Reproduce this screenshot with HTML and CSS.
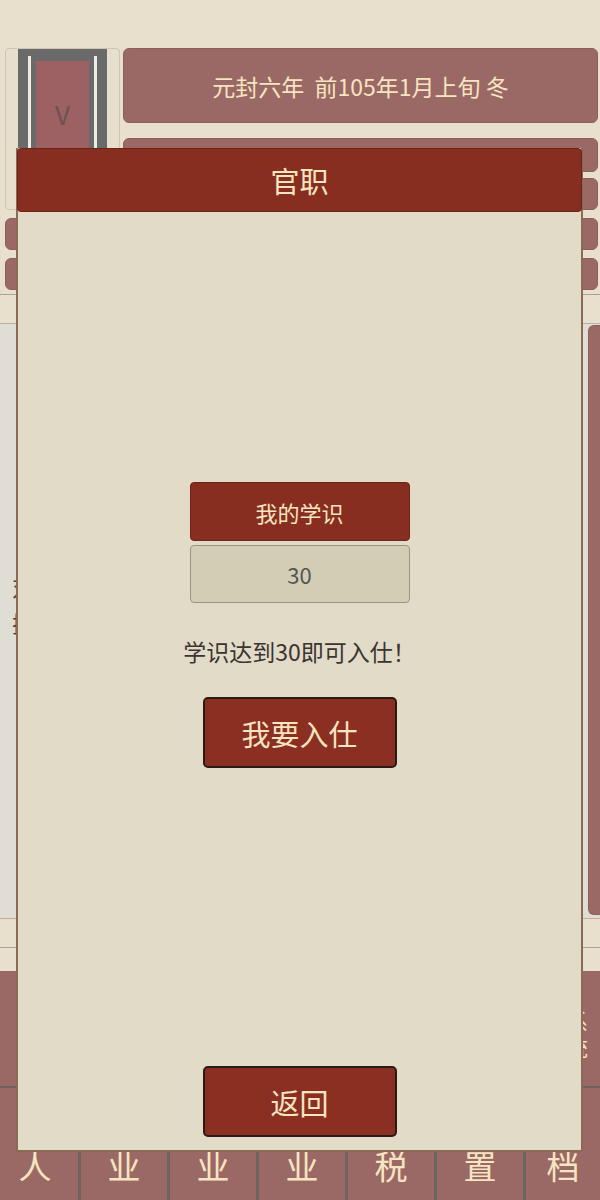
FILE: index.html
```html
<!DOCTYPE html>
<html lang="zh-CN">
<head>
    <meta charset="UTF-8">
    <meta name="viewport" content="width=device-width, initial-scale=1.0">
    <title>官职</title>
    <link rel="stylesheet" href="styles.css">
</head>
<body>
    <div class="app">
        <div class="top">
            <div class="portrait">
                <div class="frame">
                    <div class="rail">
                        <div class="face">V</div>
                    </div>
                </div>
            </div>
            <div class="info">
                <div class="bar date">元封六年&nbsp;&nbsp;前105年1月上旬 冬</div>
                <div class="bar info-a"></div>
                <div class="bar info-b"></div>
            </div>
        </div>
        <div class="bar row"></div>
        <div class="bar row"></div>
        <div class="strip"></div>

        <div class="main">
            <div class="log">
                <p>对酒当歌</p>
                <p>拂衣而去</p>
            </div>
            <div class="side"></div>
        </div>

        <div class="strip strip-a"></div>
        <div class="strip strip-b"></div>

        <div class="actions">
            <span class="vlabel">系统</span>
        </div>

        <nav class="tabs">
            <div class="tab">人</div>
            <div class="tab">业</div>
            <div class="tab">业</div>
            <div class="tab">业</div>
            <div class="tab">税</div>
            <div class="tab">置</div>
            <div class="tab">档</div>
        </nav>
    </div>

    <!-- 官职弹窗 -->
    <div class="modal">
        <header class="modal-title">官职</header>
        <div class="modal-body">
            <div class="stat-label">我的学识</div>
            <div class="stat-value">30</div>
            <p class="hint">学识达到30即可入仕！</p>
            <button class="btn">我要入仕</button>
            <button class="btn back">返回</button>
        </div>
    </div>
</body>
</html>
```

FILE: styles.css
```css
:root {
    --page-bg: #e8e0cd;
    --mauve: #9a6966;
    --mauve-edge: #8e5e5b;
    --cream: #f7e4c0;
    --red: #882e20;
    --red-edge: #6c2318;
    --panel-bg: #e2dbc8;
    --panel-edge: #8c6b55;
    --grey-panel: #dfddd4;
}

* {
    box-sizing: border-box;
}

body {
    margin: 0;
    height: 1200px;
    overflow: hidden;
    background-color: var(--page-bg);
    font-family: "Noto Sans CJK SC", "Noto Sans", sans-serif;
    color: #3b3431;
    position: relative;
}

.app {
    padding-top: 48px;
}

.bar {
    background-color: var(--mauve);
    border: 1px solid var(--mauve-edge);
    border-radius: 6px;
}

/* 顶部：头像 + 日期 */
.top {
    display: flex;
    gap: 3px;
    height: 162px;
    padding-left: 5px;
}

.portrait {
    width: 115px;
    background-color: #e6dfcc;
    border: 1px solid #cdc6b5;
    border-radius: 4px;
    padding: 0 12px;
    overflow: hidden;
}

.frame {
    height: 100%;
    background-color: #6a6a6a;
    padding: 7px 10px 0;
}

.rail {
    height: 100%;
    border-left: 3px solid #ecebe4;
    border-right: 3px solid #ecebe4;
    padding: 5px 5px 0;
}

.face {
    height: 100%;
    background-color: #9e6163;
    color: #6a5454;
    font-size: 26px;
    text-align: center;
    padding-top: 34px;
}

.info {
    flex: 1;
    display: flex;
    flex-direction: column;
    padding-right: 2px;
}

.date {
    height: 75px;
    display: flex;
    align-items: center;
    justify-content: center;
    color: var(--cream);
    font-size: 23px;
    white-space: pre;
}

.info-a {
    height: 34px;
    margin-top: 15px;
}

.info-b {
    height: 32px;
    margin-top: 6px;
}

.row {
    height: 32px;
    margin: 8px 2px 0 5px;
}

.strip {
    margin-top: 4px;
    height: 30px;
    border-top: 1px solid #aaa398;
    border-bottom: 1px solid #b6b1a6;
}

/* 中部日志区 */
.main {
    height: 594px;
    background-color: var(--grey-panel);
    display: flex;
    padding: 1px 0 3px;
}

.log {
    flex: 1;
    padding: 243px 0 0 12px;
    font-size: 22px;
    line-height: 36px;
    color: #444;
}

.log p {
    margin: 0;
}

.side {
    width: 12px;
    background-color: var(--mauve);
    border: 1px solid var(--mauve-edge);
    border-right: none;
    border-radius: 6px 0 0 6px;
}

.strip-a {
    margin-top: 0;
    height: 29px;
    border-top: 1px solid #c7ab95;
    border-bottom: none;
}

.strip-b {
    margin-top: 0;
    height: 24px;
    border-top: 1px solid #aaa398;
    border-bottom: none;
}

.actions {
    height: 117px;
    background-color: var(--mauve);
    border-bottom: 2px solid #6a625c;
    display: flex;
    justify-content: flex-end;
    align-items: center;
    padding-right: 12px;
}

.vlabel {
    width: 22px;
    font-size: 22px;
    line-height: 26px;
    color: var(--cream);
    margin-top: 8px;
}

/* 底部标签栏 */
.tabs {
    display: grid;
    grid-template-columns: 78px repeat(5, 89px) 1fr;
    height: 112px;
    background-color: var(--mauve);
}

.tab {
    padding: 59px 0 0;
    text-align: center;
    font-size: 33px;
    line-height: 36px;
    color: var(--cream);
}

.tab:first-child {
    padding-right: 8px;
}

.tab + .tab {
    border-left: 3px solid #6d6460;
}

/* 弹窗 */
.modal {
    position: absolute;
    left: 16px;
    top: 148px;
    width: 567px;
    height: 1004px;
    background-color: var(--panel-bg);
    border: 2px solid var(--panel-edge);
    border-top: none;
    display: flex;
    flex-direction: column;
}

.modal-title {
    height: 64px;
    margin: 0 -1px;
    background-color: var(--red);
    border: 1px solid var(--red-edge);
    border-radius: 4px;
    color: var(--cream);
    font-size: 29px;
    display: flex;
    align-items: center;
    justify-content: center;
}

.modal-body {
    flex: 1;
    display: flex;
    flex-direction: column;
    align-items: center;
    padding: 270px 0 13px;
}

.stat-label,
.stat-value {
    width: 220px;
    border-radius: 4px;
    display: flex;
    align-items: center;
    justify-content: center;
    font-size: 22px;
}

.stat-label {
    height: 59px;
    background-color: var(--red);
    border: 1px solid var(--red-edge);
    color: var(--cream);
}

.stat-value {
    height: 58px;
    margin-top: 4px;
    background-color: #d4cdb6;
    border: 1px solid #9b957f;
    color: #555;
}

.hint {
    margin: 30px 0 0;
    font-size: 23px;
    line-height: 36px;
    color: #3b3431;
}

.btn {
    width: 194px;
    height: 71px;
    margin-top: 28px;
    background-color: #8a2f21;
    border: 2px solid #2b1b16;
    border-radius: 5px;
    color: var(--cream);
    font-family: inherit;
    font-size: 29px;
    padding: 0;
    cursor: pointer;
}

.btn.back {
    margin-top: auto;
}
```
